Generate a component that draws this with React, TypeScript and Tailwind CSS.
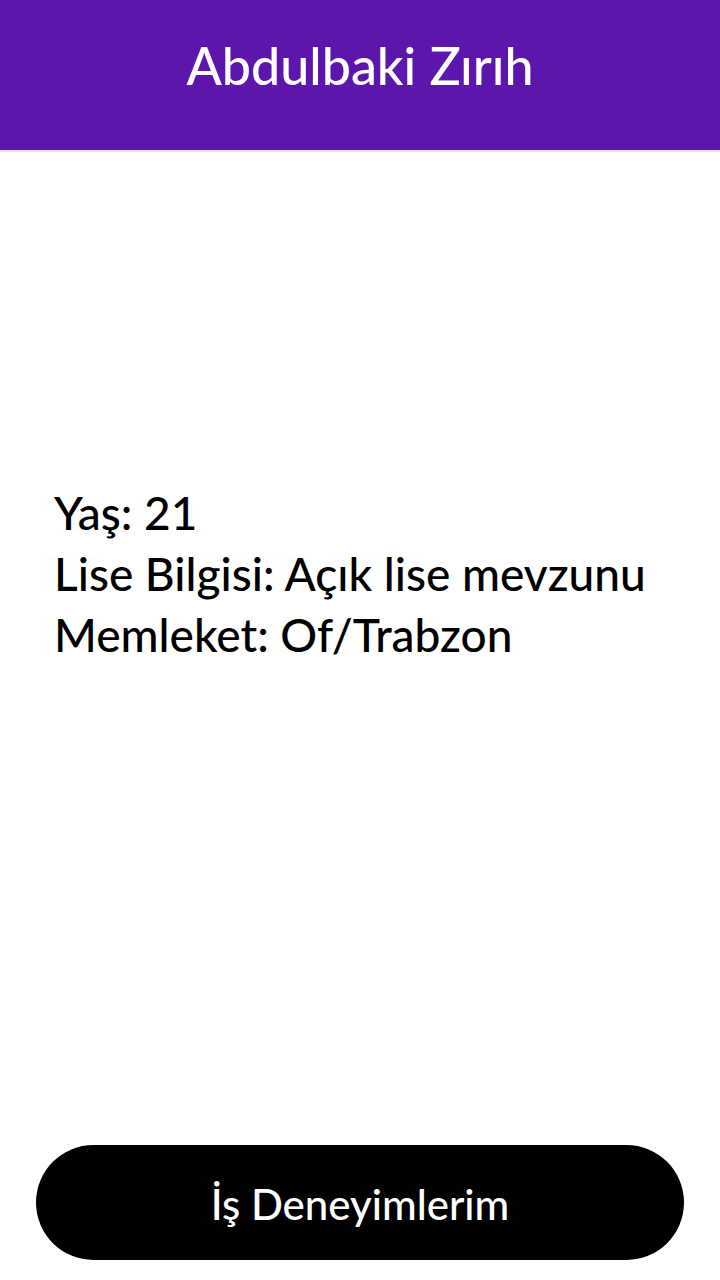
const facts = [
  { label: "Yaş", value: "21" },
  { label: "Lise Bilgisi", value: "Açık lise mevzunu" },
  { label: "Memleket", value: "Of/Trabzon" },
];

export default function App() {
  return (
    <div className="flex min-h-screen flex-col bg-white font-['Lato',sans-serif] font-medium text-black">
      <header className="border-b-2 border-[#ebe4f5] bg-[#5c16ab] pt-8 pb-13 text-center text-white">
        <h1 className="text-[52px] leading-[66px]">Abdulbaki Zırıh</h1>
      </header>
      <main className="flex flex-1 flex-col justify-center px-[54px] pb-[150px]">
        {facts.map((fact) => (
          <p key={fact.label} className="text-[46px] leading-[61px]">
            {fact.label}: {fact.value}
          </p>
        ))}
      </main>
      <footer className="px-9 pb-5">
        <button type="button" className="w-full rounded-full bg-black pt-[30px] pb-[26px] text-[42px] leading-[59px] text-white">
          İş Deneyimlerim
        </button>
      </footer>
    </div>
  );
}
